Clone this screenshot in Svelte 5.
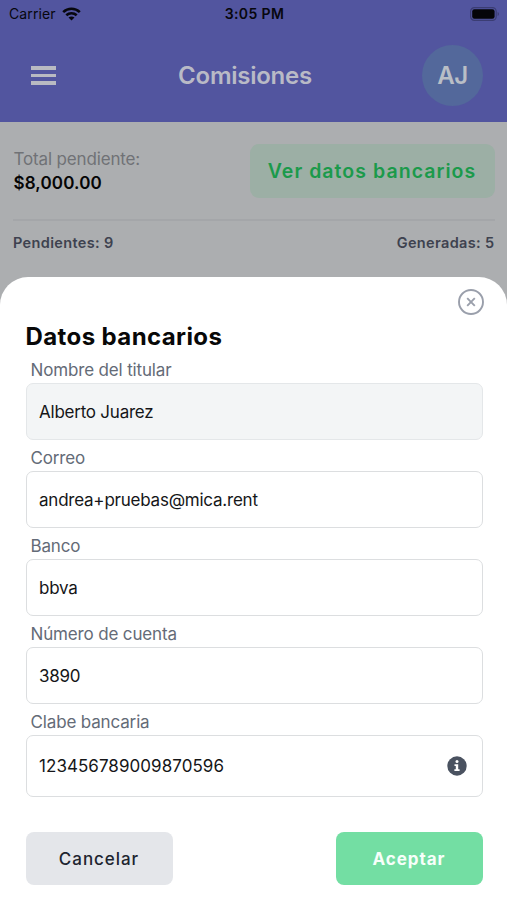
<script lang="ts">
	let fields = $state([
		{ id: 'titular', label: 'Nombre del titular', value: 'Alberto Juarez', disabled: true },
		{ id: 'correo', label: 'Correo', value: 'andrea+pruebas@mica.rent' },
		{ id: 'banco', label: 'Banco', value: 'bbva' },
		{ id: 'cuenta', label: 'Número de cuenta', value: '3890' },
		{ id: 'clabe', label: 'Clabe bancaria', value: '123456789009870596', info: true }
	]);
</script>

<div class="screen">
	<header>
		<div class="status">
			<div class="carrier">
				<span>Carrier</span>
				<svg width="19" height="14" viewBox="0 0 19 14" fill="none" stroke="#07070d" stroke-width="2.6">
					<path d="M1.2 5.1C5.9 .6 13.1 .6 17.8 5.1" />
					<path d="M4.3 8.3C7.3 5.5 11.7 5.5 14.7 8.3" />
					<path d="M9.5 13.6L6.5 10.6C8.2 9.1 10.8 9.1 12.5 10.6Z" fill="#07070d" stroke="none" />
				</svg>
			</div>
			<span class="time">3:05 PM</span>
			<svg class="battery" width="30" height="14" viewBox="0 0 30 14">
				<rect x=".6" y=".6" width="25.6" height="12.8" rx="3.8" fill="none" stroke="#3b3d73" stroke-width="1.2" />
				<rect x="2.2" y="2.2" width="22.4" height="9.6" rx="2.2" fill="#050509" />
				<path d="M27.6 5v4c1.8-.7 1.8-3.3 0-4z" fill="#3b3d73" />
			</svg>
		</div>
		<div class="bar">
			<button class="menu" aria-label="Menú">
				<i></i>
				<i></i>
				<i></i>
			</button>
			<h1>Comisiones</h1>
			<div class="avatar">AJ</div>
		</div>
	</header>

	<section class="summary">
		<div class="total">
			<div>
				<p>Total pendiente:</p>
				<strong>$8,000.00</strong>
			</div>
			<button class="show">Ver datos bancarios</button>
		</div>
		<div class="counts">
			<span>Pendientes: 9</span>
			<span>Generadas: 5</span>
		</div>
	</section>

	<section class="sheet">
		<button class="close" aria-label="Cerrar">
			<svg width="28" height="28" viewBox="0 0 28 28" fill="none" stroke="#9a9fab" stroke-width="1.9">
				<circle cx="14" cy="14" r="12" />
				<path d="M10.2 10.2L17.8 17.8M17.8 10.2L10.2 17.8" />
			</svg>
		</button>
		<h2>Datos bancarios</h2>

		{#each fields as field (field.id)}
			<label for={field.id}>{field.label}</label>
			<div class="box" class:disabled={field.disabled} class:tall={field.info}>
				<input id={field.id} type="text" bind:value={field.value} disabled={field.disabled} />
				{#if field.info}
					<svg width="20" height="20" viewBox="0 0 20 20">
						<circle cx="10" cy="10" r="9.7" fill="#4a5260" />
						<circle cx="10" cy="5.6" r="1.5" fill="#fff" />
						<path d="M7.5 8.3h3.7v5h1.4v1.7h-5.2v-1.7h1.4v-3.3h-1.3z" fill="#fff" />
					</svg>
				{/if}
			</div>
		{/each}

		<div class="actions">
			<button class="cancel">Cancelar</button>
			<button class="accept">Aceptar</button>
		</div>
	</section>
</div>

<style>
	:global(body) {
		margin: 0;
	}

	.screen {
		display: flex;
		flex-direction: column;
		height: 900px;
		overflow: hidden;
		background: #acaeb0;
		font-family: Inter, 'Liberation Sans', sans-serif;
	}

	h1,
	h2,
	p {
		margin: 0;
	}

	button {
		padding: 0;
		border: none;
		background: none;
		font-family: inherit;
		cursor: pointer;
	}

	header {
		height: 122px;
		background: #52559f;
	}

	.status {
		display: grid;
		grid-template-columns: 1fr auto 1fr;
		align-items: center;
		height: 27px;
		padding: 0 7px 0 9px;
		box-sizing: border-box;
		color: #07070d;
		font-size: 14px;
	}

	.carrier {
		display: flex;
		align-items: center;
		gap: 6px;
		letter-spacing: 0.1px;
	}

	.time {
		font-weight: 600;
		letter-spacing: 0.4px;
	}

	.battery {
		justify-self: end;
	}

	.bar {
		display: grid;
		grid-template-columns: 61px 1fr 61px;
		align-items: center;
		height: 97px;
		padding: 0 24px 0 31px;
	}

	.menu {
		display: flex;
		flex-direction: column;
		gap: 4px;
	}

	.menu i {
		width: 25px;
		height: 3.5px;
		background: #b9bac2;
	}

	h1 {
		margin-right: 24px;
		color: #b9bac6;
		font-size: 24px;
		font-weight: 600;
		letter-spacing: -0.25px;
		text-align: center;
	}

	.avatar {
		width: 61px;
		height: 61px;
		border-radius: 50%;
		background: #53689b;
		color: #b9bec6;
		font-size: 24px;
		font-weight: 600;
		letter-spacing: -0.5px;
		line-height: 61px;
		text-align: center;
	}

	.summary {
		height: 155px;
		padding: 22px 12.5px 0 13px;
		box-sizing: border-box;
	}

	.total {
		display: flex;
		justify-content: space-between;
		height: 75px;
		border-bottom: 2px solid #a4a6a9;
	}

	.total p {
		margin-top: 3px;
		padding-left: 0.5px;
		color: #707276;
		font-size: 17px;
		letter-spacing: -0.15px;
		line-height: 24px;
	}

	.total strong {
		display: block;
		padding-left: 0.5px;
		color: #050505;
		font-size: 17px;
		font-weight: 600;
		letter-spacing: 0.15px;
		line-height: 24px;
	}

	.show {
		width: 245px;
		height: 54px;
		border-radius: 9px;
		background: #9cafa5;
		color: #1b9a4b;
		font-size: 19.5px;
		font-weight: 600;
		letter-spacing: 1.05px;
	}

	.counts {
		display: flex;
		justify-content: space-between;
		margin-top: 12px;
		color: #3e424f;
		font-size: 14.5px;
		font-weight: 600;
		letter-spacing: 0.35px;
		line-height: 20px;
	}

	.sheet {
		display: flex;
		flex-direction: column;
		flex: 1;
		padding: 11px 24.5px 0 25.5px;
		border-radius: 28px 28px 0 0;
		background: #fff;
	}

	.close {
		align-self: flex-end;
		width: 28px;
		height: 28px;
		margin-right: -2.5px;
	}

	.close svg {
		display: block;
	}

	h2 {
		margin-top: 5px;
		color: #080808;
		font-size: 24px;
		font-weight: 700;
		letter-spacing: 0.4px;
		line-height: 32px;
	}

	label {
		padding: 5px 5px 0;
		color: #646b77;
		font-size: 17px;
		letter-spacing: -0.15px;
		line-height: 26px;
	}

	h2 + label {
		padding-top: 4px;
	}

	.box {
		display: flex;
		align-items: center;
		height: 57px;
		padding: 0 15px 0 12.5px;
		box-sizing: border-box;
		border: 1.5px solid #dcdee0;
		border-radius: 7px;
	}

	.box.disabled {
		border-color: #e4e7e9;
		background: #f3f5f6;
	}

	.box.tall {
		height: 62px;
	}

	input {
		flex: 1;
		min-width: 0;
		padding: 0;
		border: none;
		outline: none;
		background: transparent;
		color: #151618;
		font-family: inherit;
		font-size: 17px;
		letter-spacing: -0.23px;
	}

	.tall input {
		letter-spacing: 0.05px;
	}

	.actions {
		display: flex;
		justify-content: space-between;
		margin-top: 35px;
	}

	.actions button {
		width: 147px;
		height: 53px;
		border-radius: 8px;
		font-size: 17px;
		font-weight: 600;
		letter-spacing: 0.95px;
	}

	.actions .cancel {
		background: #e4e6ea;
		color: #20242f;
		font-weight: 500;
	}

	.actions .accept {
		background: #73dea3;
		color: #f7fffa;
		font-weight: 700;
	}
</style>
